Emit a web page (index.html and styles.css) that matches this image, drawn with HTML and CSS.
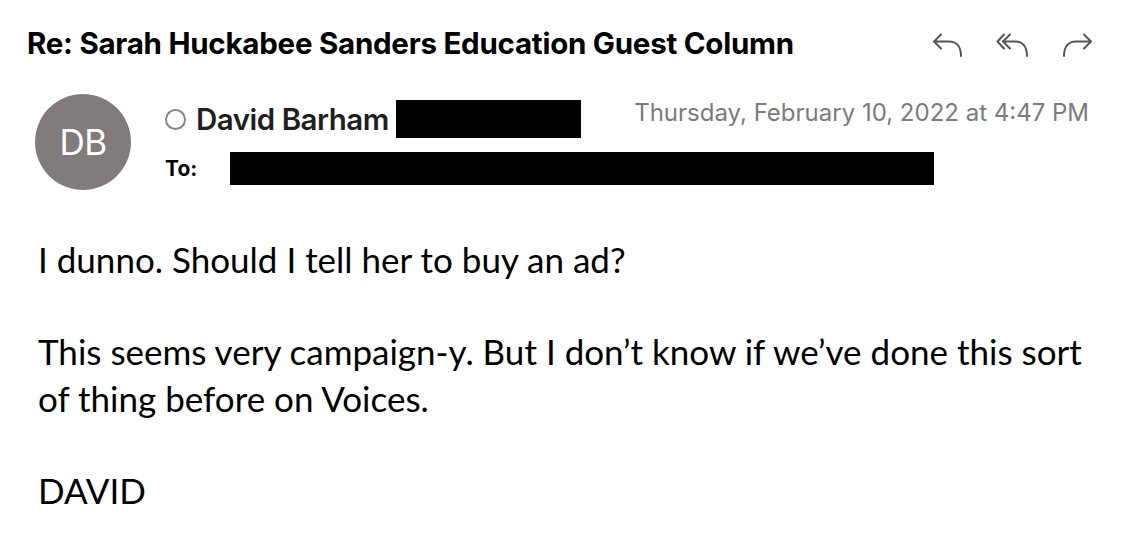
FILE: index.html
```html
<!DOCTYPE html>
<html>
<head>
<meta charset="utf-8">
<link rel="stylesheet" href="styles.css">
</head>
<body>
<div class="mail">
  <div class="subject-row">
    <h1 class="subject">Re: Sarah Huckabee Sanders Education Guest Column</h1>
    <div class="actions">
      <svg class="icon" width="32" height="24" viewBox="0 0 32 24"><path d="M9 1.5 L2 8.5 L9 15.5 M2 8.5 H17 C24 8.5 29 13 29 23" /></svg>
      <svg class="icon" width="33" height="24" viewBox="0 0 33 24"><path d="M8 1.5 L1.5 8.5 L8 15.5 M14 1.5 L7 8.5 L14 15.5 M7 8.5 H19 C26 8.5 31 13 31 23" /></svg>
      <svg class="icon" width="32" height="24" viewBox="0 0 32 24"><path d="M23 1.5 L30 8.5 L23 15.5 M30 8.5 H15 C8 8.5 3 13 3 23" /></svg>
    </div>
  </div>
  <div class="meta">
    <div class="avatar">DB</div>
    <div class="people">
      <div class="from-line">
        <span class="dot"></span>
        <span class="sender">David Barham</span>
        <span class="redact redact-from"></span>
      </div>
      <div class="to-line">
        <span class="to-label">To:</span>
        <span class="redact redact-to"></span>
      </div>
    </div>
    <div class="date">Thursday, February 10, 2022 at 4:47 PM</div>
  </div>
  <div class="body">
    <p>I dunno. Should I tell her to buy an ad?</p>
    <p>This seems very campaign-y. But I don’t know if we’ve done this sort of thing before on Voices.</p>
    <p>DAVID</p>
  </div>
</div>
</body>
</html>
```

FILE: styles.css
```css
html, body {
  margin: 0;
  padding: 0;
  background: #ffffff;
}

.mail {
  width: 1130px;
  height: 542px;
  overflow: hidden;
  font-family: Inter, "Liberation Sans", sans-serif;
  color: #000;
}

.subject-row {
  display: flex;
  align-items: center;
  justify-content: space-between;
  padding: 26px 37px 0 27px;
  height: 34px;
}

.subject {
  margin: 0;
  font-size: 29.5px;
  font-weight: 700;
  letter-spacing: -0.25px;
  line-height: 34px;
  white-space: nowrap;
}

.actions {
  display: flex;
  gap: 32px;
  align-items: center;
  padding-top: 4px;
}

.icon path {
  fill: none;
  stroke: #555555;
  stroke-width: 2;
  stroke-linecap: round;
  stroke-linejoin: round;
}

.meta {
  display: flex;
  align-items: flex-start;
  padding: 34px 41px 0 35px;
}

.avatar {
  width: 96px;
  height: 96px;
  border-radius: 50%;
  background: #817b7c;
  color: #fff;
  display: flex;
  align-items: center;
  justify-content: center;
  font-size: 35px;
  font-weight: 400;
  letter-spacing: -0.5px;
  flex-shrink: 0;
}

.people {
  margin-left: 34px;
  padding-top: 6px;
  flex: 1;
}

.from-line {
  display: flex;
  align-items: center;
  height: 38px;
}

.dot {
  width: 21px;
  height: 21px;
  border: 2px solid #858585;
  border-radius: 50%;
  margin-right: 10px;
  box-sizing: border-box;
}

.sender {
  font-size: 29.5px;
  font-weight: 600;
  color: #1f1f1f;
  letter-spacing: -0.5px;
}

.redact {
  display: inline-block;
  background: #000;
}

.redact-from {
  width: 185px;
  height: 38px;
  margin-left: 7px;
}

.to-line {
  display: flex;
  align-items: center;
  margin-top: 14px;
  height: 33px;
}

.to-label {
  font-size: 21px;
  font-weight: 700;
  width: 65px;
}

.redact-to {
  width: 704px;
  height: 33px;
}

.date {
  font-size: 24px;
  color: #7b7b7b;
  padding-top: 4px;
  white-space: nowrap;
  margin-left: -430px;
}

.body {
  padding: 46px 40px 0 38px;
  font-family: Lato, "Open Sans", sans-serif;
  font-size: 35px;
  line-height: 47px;
}

.body p {
  margin: 0 0 45px 0;
}
```
